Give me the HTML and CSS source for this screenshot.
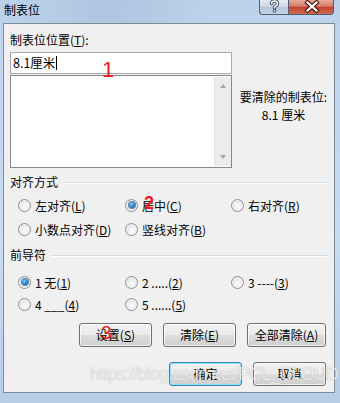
FILE: index.html
```html
<!DOCTYPE html>
<html lang="zh">
<head>
<meta charset="utf-8">
<link rel="stylesheet" href="styles.css">
</head>
<body>
<div class="window">
  <div class="titlebar">
    <div class="title">制表位</div>
    <div class="caption-btns">
      <div class="cap help">
        <svg width="29" height="15" viewBox="0 0 29 15">
          <path d="M11.5 4.5 Q11.5 2 14.5 2 Q17.5 2 17.5 4.6 Q17.5 6.2 15.6 7 Q14.6 7.5 14.6 8.8" fill="none" stroke="#3a4d66" stroke-width="3.4" stroke-linecap="round"/>
          <circle cx="14.6" cy="11.8" r="1.9" fill="#3a4d66"/>
          <path d="M11.5 4.5 Q11.5 2 14.5 2 Q17.5 2 17.5 4.6 Q17.5 6.2 15.6 7 Q14.6 7.5 14.6 8.8" fill="none" stroke="#fff" stroke-width="1.5" stroke-linecap="round"/>
          <circle cx="14.6" cy="11.8" r="0.9" fill="#fff"/>
        </svg>
      </div>
      <div class="cap close">
        <svg width="46" height="15" viewBox="0 0 46 15">
          <path d="M18.5 3.5 L27.5 11.5 M27.5 3.5 L18.5 11.5" stroke="#4a1a14" stroke-width="4.4" stroke-linecap="square"/>
          <path d="M18.5 3.5 L27.5 11.5 M27.5 3.5 L18.5 11.5" stroke="#fff" stroke-width="2.2" stroke-linecap="square"/>
        </svg>
      </div>
    </div>
  </div>

  <div class="client">
    <div class="top">
      <div class="left">
        <div class="label">制表位位置(<u>T</u>):</div>
        <div class="input">8.1厘米<span class="caret"></span></div>
        <div class="listbox">
          <div class="list-area"></div>
          <div class="scrollbar">
            <span class="arrow up"></span>
            <span class="arrow down"></span>
          </div>
        </div>
      </div>
      <div class="right">
        <div>要清除的制表位:</div>
        <div>8.1 厘米</div>
      </div>
    </div>

    <div class="group-head"><span>对齐方式</span><span class="rule"></span></div>
    <div class="radios">
      <label class="radio"><span class="dot"></span>左对齐(<u>L</u>)</label>
      <label class="radio"><span class="dot on"></span>居中(<u>C</u>)</label>
      <label class="radio"><span class="dot"></span>右对齐(<u>R</u>)</label>
      <label class="radio"><span class="dot"></span>小数点对齐(<u>D</u>)</label>
      <label class="radio"><span class="dot"></span>竖线对齐(<u>B</u>)</label>
    </div>

    <div class="group-head second"><span>前导符</span><span class="rule"></span></div>
    <div class="radios leaders">
      <label class="radio"><span class="dot on"></span>1 无(<u>1</u>)</label>
      <label class="radio"><span class="dot"></span>2 .....(<u>2</u>)</label>
      <label class="radio"><span class="dot"></span>3 ----(<u>3</u>)</label>
      <label class="radio"><span class="dot"></span>4 ___(<u>4</u>)</label>
      <label class="radio"><span class="dot"></span>5 ......(<u>5</u>)</label>
    </div>

    <div class="btn-row">
      <div class="btn">设置(<u>S</u>)</div>
      <div class="btn">清除(<u>E</u>)</div>
      <div class="btn wide">全部清除(<u>A</u>)</div>
    </div>
    <div class="btn-row bottom">
      <div class="btn default">确定</div>
      <div class="btn">取消</div>
    </div>
  </div>

  <div class="mark m1">1</div>
  <div class="mark m2">2</div>
  <div class="mark m3">3</div>
  <div class="watermark">https://blog.csdn.net/PCL_CLOUD</div>
</div>
</body>
</html>
```

FILE: styles.css
```css
html, body {
  margin: 0;
  padding: 0;
}
body {
  width: 340px;
  height: 403px;
  overflow: hidden;
  background: linear-gradient(180deg, #bcd2ec 0%, #c7dbf1 60%, #b7cde6 100%);
  font-family: "Noto Sans CJK SC", "Microsoft YaHei", sans-serif;
  font-size: 12px;
  color: #000;
}
.window {
  position: relative;
  width: 340px;
  height: 403px;
  overflow: hidden;
}
.titlebar {
  height: 23px;
  display: flex;
  align-items: flex-start;
  background: linear-gradient(90deg, rgba(190,210,236,0) 0%, rgba(150,175,205,0.35) 30%, rgba(150,175,205,0.25) 45%, rgba(190,210,236,0) 60%);
}
.title {
  padding-left: 4px;
  line-height: 20px;
  font-size: 12px;
}
.caption-btns {
  margin-left: auto;
  margin-right: 6px;
  display: flex;
  height: 15px;
}
.cap {
  height: 15px;
  box-sizing: border-box;
  border: 1px solid #4f5e73;
  border-top: none;
}
.cap svg { display: block; margin-top: -1px; }
.help {
  width: 29px;
  border-right: none;
  border-radius: 0 0 0 4px;
  background: linear-gradient(180deg, #e4ebf3 0%, #c9d6e5 50%, #b4c5da 51%, #c3d3e6 100%);
}
.close {
  width: 46px;
  border-radius: 0 0 4px 0;
  background: linear-gradient(180deg, #e9a99b 0%, #d47a68 45%, #c1442f 50%, #cf6a4f 100%);
}

.client {
  margin-left: 3px;
  width: 332px;
  height: 370px;
  box-sizing: border-box;
  border: 1px solid #7d8b99;
  background: #f0f0f0;
  padding: 8px 0 0 6px;
}
.top {
  display: flex;
}
.left {
  width: 222px;
}
.label {
  line-height: 16px;
}
u {
  text-decoration: underline;
  text-underline-offset: 1px;
}
.input {
  margin-top: 4px;
  height: 22px;
  box-sizing: border-box;
  border: 1px solid #a5a9b0;
  background: #fff;
  padding-left: 2px;
  line-height: 20px;
  font-size: 12.5px;
  display: flex;
  align-items: center;
}
.caret {
  display: inline-block;
  width: 1px;
  height: 14px;
  background: #000;
  margin-left: 1px;
}
.listbox {
  margin-top: 1px;
  height: 93px;
  box-sizing: border-box;
  border: 1px solid #828790;
  background: #fff;
  display: flex;
}
.list-area {
  flex: 1;
}
.scrollbar {
  width: 17px;
  margin: 1px 0;
  background: #ececec;
  border-left: 1px solid #e2e2e2;
  display: flex;
  flex-direction: column;
  justify-content: space-between;
  align-items: center;
  padding: 7px 0;
  box-sizing: border-box;
}
.arrow {
  width: 0;
  height: 0;
  border-left: 3.5px solid transparent;
  border-right: 3.5px solid transparent;
}
.arrow.up { border-bottom: 4px solid #a9a9a9; }
.arrow.down { border-top: 4px solid #a9a9a9; }
.right {
  flex: 1;
  text-align: center;
  padding-top: 56px;
  line-height: 18px;
  padding-left: 1px;
}

.group-head {
  margin-top: 6px;
  line-height: 16px;
  display: flex;
  align-items: center;
}
.group-head.second {
  margin-top: 6px;
}
.rule {
  flex: 1;
  height: 1px;
  background: #d3dde6;
  margin: 0 6px 0 5px;
  box-shadow: 0 1px 0 #ffffff;
}
.radios {
  margin-top: 3px;
  padding-left: 8px;
  display: grid;
  grid-template-columns: 107px 106px auto;
  grid-auto-rows: 24px;
}
.radios.leaders {
  margin-top: 8px;
  grid-auto-rows: 22px;
}
.radio {
  display: flex;
  align-items: center;
  white-space: nowrap;
}
.dot {
  width: 13px;
  height: 13px;
  box-sizing: border-box;
  border-radius: 50%;
  border: 1px solid #8f8f8f;
  background: radial-gradient(circle at 55% 60%, #fdfdfd 0%, #ececec 45%, #c9c9c9 100%);
  box-shadow: inset 0 0 0 1px #f4f4f4;
  margin-right: 4px;
  flex: none;
  display: flex;
  align-items: center;
  justify-content: center;
}
.dot.on::after {
  content: "";
  width: 6px;
  height: 6px;
  border-radius: 50%;
  background: radial-gradient(circle at 40% 35%, #8fd8ff 0%, #2a8ad4 45%, #0d4a86 100%);
  box-shadow: 0 0 0 1px #5a7fa3;
}

.btn-row {
  margin-top: 8px;
  display: flex;
  justify-content: flex-end;
  gap: 11px;
  padding-right: 8px;
}
.btn-row.bottom {
  margin-top: 15px;
}
.btn {
  width: 73px;
  height: 24px;
  box-sizing: border-box;
  border: 1px solid #707070;
  border-radius: 3px;
  background: linear-gradient(180deg, #f2f2f2 0%, #ebebeb 48%, #dddddd 52%, #cfcfcf 100%);
  box-shadow: inset 0 0 0 1px rgba(255,255,255,0.7);
  text-align: center;
  line-height: 21px;
}
.btn.wide {
  width: 79px;
}
.btn.default {
  border-color: #3c7fb1;
  box-shadow: inset 0 0 0 1px #8fe0fb;
}

.mark {
  position: absolute;
  color: #ee1c1c;
  font-family: "Liberation Sans", Arial, sans-serif;
  line-height: 1;
}
.m1 { left: 102px; top: 59px; font-size: 22px; }
.m2 { left: 144px; top: 194px; font-size: 18px; font-weight: bold; }
.m3 { left: 101px; top: 323px; font-size: 19px; }
.watermark {
  position: absolute;
  left: 90px;
  top: 362px;
  font-family: "Liberation Sans", Arial, sans-serif;
  font-size: 17.5px;
  line-height: 24px;
  color: rgba(255,255,255,0.75);
  text-shadow: 0 0 1px rgba(120,120,120,0.6);
  letter-spacing: -0.6px;
  white-space: nowrap;
}
```
